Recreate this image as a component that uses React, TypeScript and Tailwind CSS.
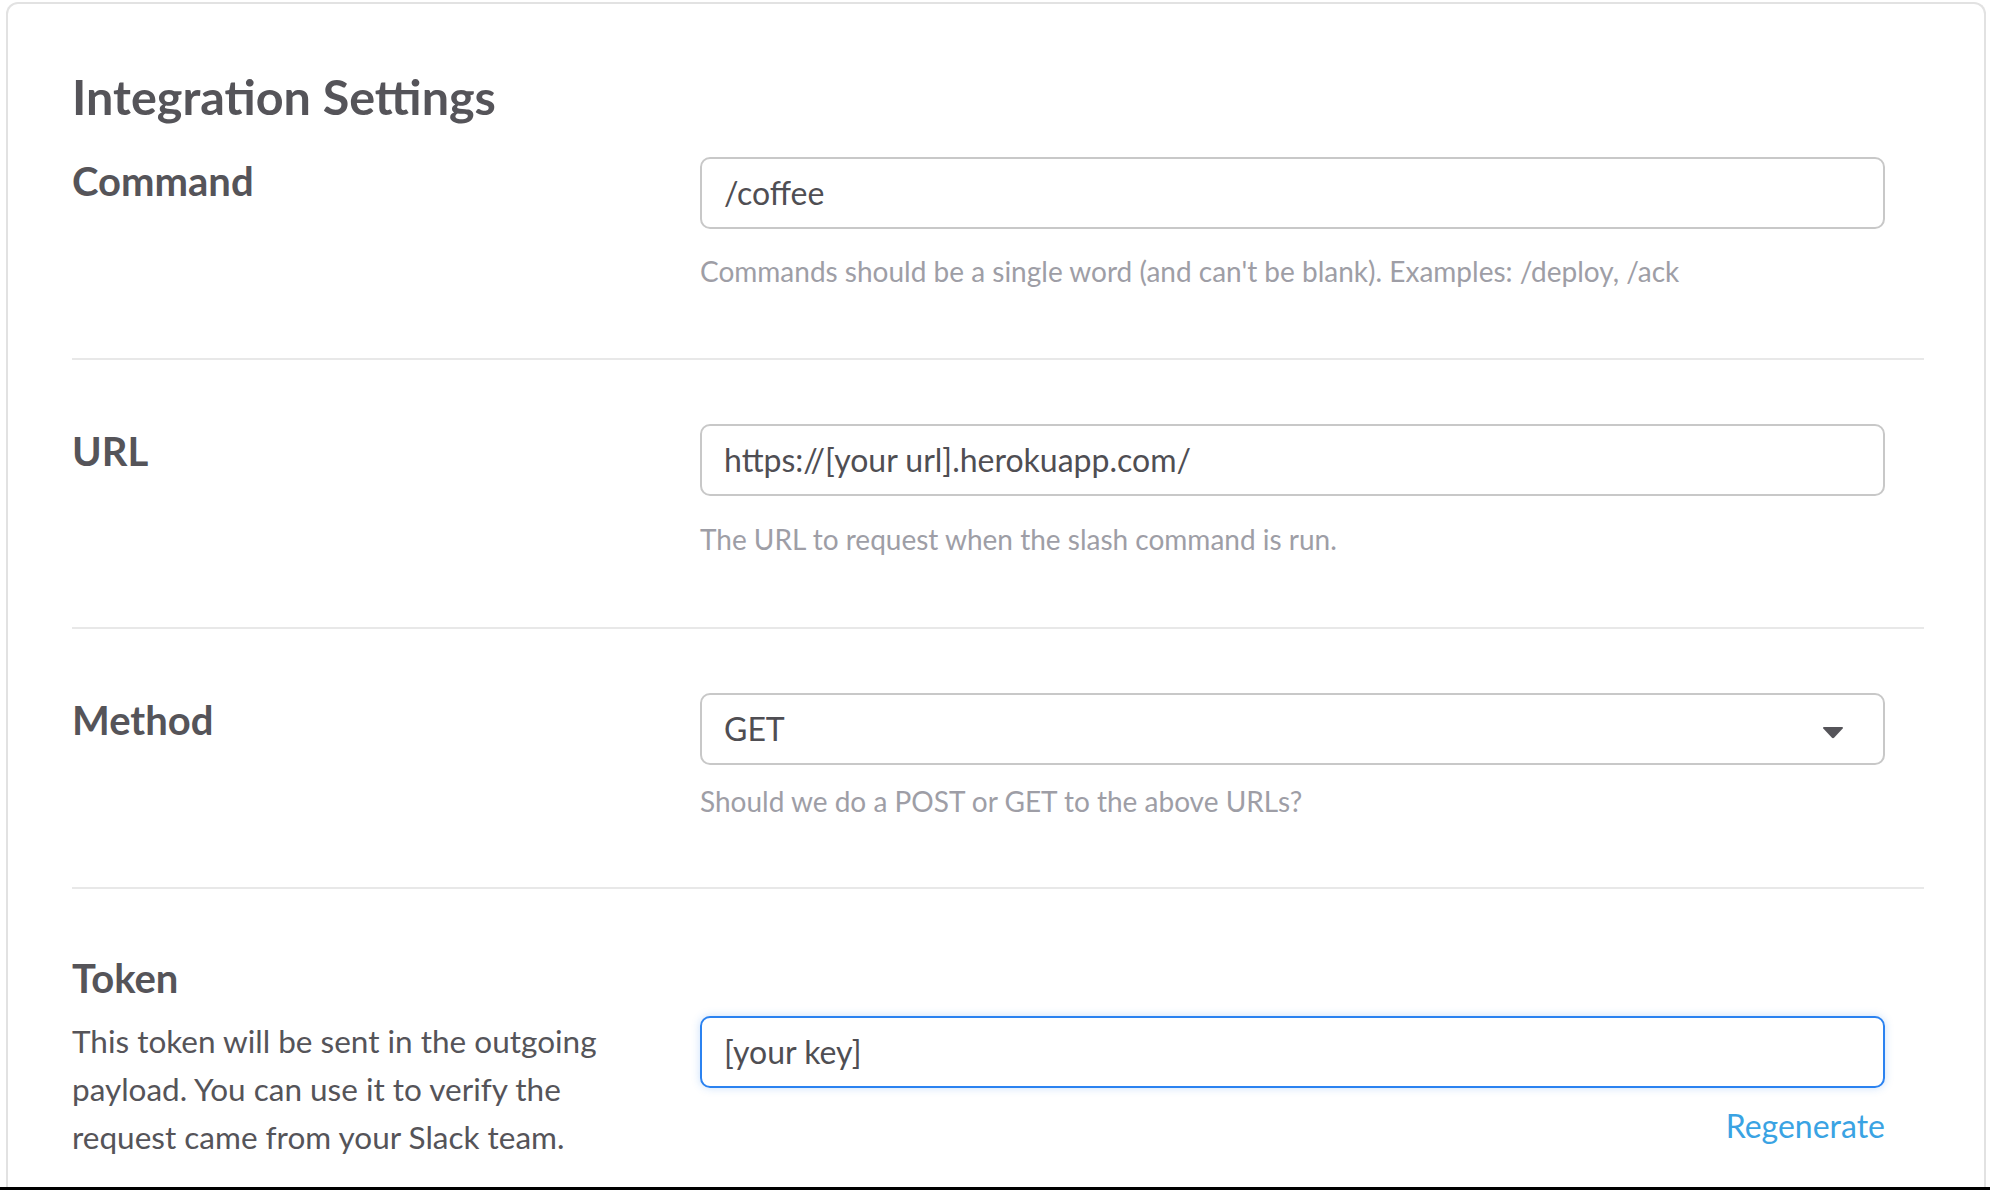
import { useState } from 'react';

type Field = {
  label: string;
  value: string;
  help: string;
  select?: boolean;
};

const fields: Field[] = [
  { label: 'Command', value: '/coffee', help: "Commands should be a single word (and can't be blank). Examples: /deploy, /ack" },
  { label: 'URL', value: 'https://[your url].herokuapp.com/', help: 'The URL to request when the slash command is run.' },
  { label: 'Method', value: 'GET', help: 'Should we do a POST or GET to the above URLs?', select: true },
];

function Caret() {
  return (
    <svg width="22" height="13" viewBox="0 0 22 13" className="shrink-0 mt-[6px]">
      <path d="M2 1 H20 Q21.8 1 20.7 2.5 L12.3 11.6 Q11 12.9 9.7 11.6 L1.3 2.5 Q0.2 1 2 1 Z" fill="#555459" />
    </svg>
  );
}

function FieldRow({ field, first }: { field: Field; first: boolean }) {
  const rowCls = first
    ? 'grid grid-cols-[628px_1fr] pb-[67px]'
    : field.select
      ? 'grid grid-cols-[628px_1fr] border-t-2 border-[#e8e8e8] pt-[64px] pb-[66px]'
      : 'grid grid-cols-[628px_1fr] border-t-2 border-[#e8e8e8] pt-[64px] pb-[68px]';
  return (
    <div className={rowCls}>
      <h3 className={first ? 'text-[40px] leading-[48px] font-bold text-[#555459]' : 'mt-[3px] text-[40px] leading-[48px] font-bold text-[#555459]'}>
        {field.label}
      </h3>
      <div className="pr-[39px]">
        <div className="h-[72px] flex items-center justify-between border-2 border-[#c8c8c8] rounded-[10px] px-[22px] pr-[39px] text-[32px] text-[#4f4e53]">
          <span>{field.value}</span>
          {field.select && <Caret />}
        </div>
        <p className={field.select ? 'mt-[16px] text-[28px] leading-[40px] text-[#9e9ea6]' : first ? 'mt-[22px] text-[28px] leading-[40px] text-[#9e9ea6]' : 'mt-[23px] text-[28px] leading-[40px] text-[#9e9ea6]'}>
          {field.help}
        </p>
      </div>
    </div>
  );
}

export default function App() {
  const [token] = useState('[your key]');

  return (
    <div className="h-[1190px] overflow-hidden bg-white flex flex-col font-['Lato',sans-serif]">
      <div className="flex-1 ml-[6px] mr-[4px] mt-[2px] border-2 border-b-0 border-[#e2e2e2] rounded-t-[12px] pl-[64px] pr-[60px] pt-[64px]">
        <h2 className="text-[48.5px] leading-[56px] font-bold text-[#555459] mb-[33px]">Integration Settings</h2>
        {fields.map((f, i) => (
          <FieldRow key={f.label} field={f} first={i === 0} />
        ))}
        <div className="grid grid-cols-[628px_1fr] border-t-2 border-[#e8e8e8] pt-[64px]">
          <div>
            <h3 className="mt-[1px] text-[40px] leading-[48px] font-bold text-[#555459]">Token</h3>
            <p className="mt-[15px] text-[31.5px] leading-[48px] text-[#555459] pr-[60px]">
              This token will be sent in the outgoing payload. You can use it to verify the request came from your Slack team.
            </p>
          </div>
          <div className="pr-[39px] mt-[63px]">
            <div className="h-[72px] flex items-center border-2 border-[#2b82f0] rounded-[10px] px-[22px] text-[32px] text-[#4f4e53] shadow-[0_0_8px_rgba(43,130,240,0.25)]">
              {token}
            </div>
            <div className="flex justify-end mt-[18px]">
              <a className="text-[32px] leading-[40px] text-[#3aa3e3]">Regenerate</a>
            </div>
          </div>
        </div>
      </div>
      <div className="h-[3px] bg-black" />
    </div>
  );
}
